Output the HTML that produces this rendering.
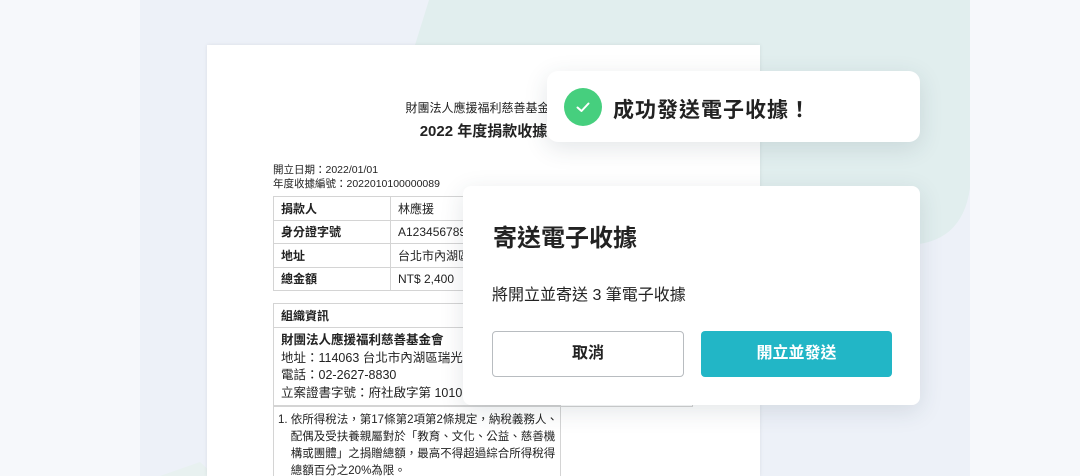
<!DOCTYPE html>
<html><head><meta charset="utf-8"><style>
*{margin:0;padding:0;box-sizing:border-box}
html,body{width:1080px;height:476px;overflow:hidden}
body{background:#f6f8fb;position:relative;font-family:"Liberation Sans","Noto Sans CJK TC",sans-serif;color:#222}
.panel{position:absolute;left:140px;top:0;width:830px;height:476px;background:#edf1f8;overflow:hidden}
.doc{position:absolute;left:207px;top:45px;width:553px;height:431px;background:#fff;box-shadow:0 0 4px rgba(0,0,0,.08);overflow:hidden}
.abs{position:absolute;white-space:nowrap}
table{border-collapse:collapse;position:absolute}
td{border:1px solid #d4d4d4;font-size:12px;padding:0 7px;height:23.5px}
.card{position:absolute;background:#fff;box-shadow:0 6px 24px rgba(40,60,80,.13)}
</style></head><body>
<div class="panel"></div>
<svg class="abs" style="left:0;top:0" width="1080" height="476">
<path d="M429,0 H970 V188 Q962,245 905,245 H360 L415,45 Z" fill="#e1eeee"/>
<path d="M160,476 L200,462 L215,476 Z" fill="#e8f1f0"/>
</svg>
<div class="doc">
<div class="abs" style="left:0;width:553px;text-align:center;top:54px;font-size:12px">財團法人應援福利慈善基金會</div>
<div class="abs" style="left:0;width:553px;text-align:center;top:75px;font-size:15px;font-weight:bold">2022 年度捐款收據</div>
<div class="abs" style="left:66px;top:118px;font-size:10.5px;line-height:14px">開立日期：2022/01/01<br>年度收據編號：2022010100000089</div>
<table style="left:66px;top:151px;width:420px">
<tr><td style="width:117px;font-weight:bold">捐款人</td><td>林應援</td></tr>
<tr><td style="font-weight:bold">身分證字號</td><td>A123456789</td></tr>
<tr><td style="font-weight:bold">地址</td><td>台北市內湖區瑞光路</td></tr>
<tr><td style="font-weight:bold">總金額</td><td>NT$ 2,400</td></tr>
</table>
<table style="left:66px;top:258px;width:420px">
<tr><td style="font-weight:bold;height:24px">組織資訊</td></tr>
<tr><td style="line-height:17.5px;padding:4px 7px;font-size:12.5px"><b>財團法人應援福利慈善基金會</b><br>地址：114063 台北市內湖區瑞光路 399號<br>電話：02-2627-8830<br>立案證書字號：府社啟字第 1010101010號</td></tr>
</table>
<table style="left:66px;top:360px;width:284px">
<tr><td style="line-height:17px;padding:6px 2px 6px 4px;font-size:11.5px;height:90px;vertical-align:top;white-space:nowrap">1. 依所得稅法，第17條第2項第2條規定，納稅義務人、<br>&nbsp;&nbsp;&nbsp;&nbsp;配偶及受扶養親屬對於「教育、文化、公益、慈善機<br>&nbsp;&nbsp;&nbsp;&nbsp;構或團體」之捐贈總額，最高不得超過綜合所得稅得<br>&nbsp;&nbsp;&nbsp;&nbsp;總額百分之20%為限。</td></tr>
</table>
</div>
<div class="card" style="left:547px;top:71px;width:373px;height:71px;border-radius:11px">
<div class="abs" style="left:17px;top:17px;width:38px;height:38px;border-radius:50%;background:#46cf7e"></div>
<svg class="abs" style="left:17px;top:17px" width="38" height="38"><path d="M13.5,19.5 L17.5,23 L24.5,15.5" fill="none" stroke="#fff" stroke-width="2" stroke-linecap="round" stroke-linejoin="round"/></svg>
<div class="abs" style="left:66px;top:23px;font-size:21px;font-weight:bold;letter-spacing:1px">成功發送電子收據！</div>
</div>
<div class="card" style="left:463px;top:186px;width:457px;height:219px;border-radius:8px">
<div class="abs" style="left:30px;top:32px;font-size:24px;font-weight:bold">寄送電子收據</div>
<div class="abs" style="left:29px;top:95px;font-size:16px">將開立並寄送 3 筆電子收據</div>
<div class="abs" style="left:29px;top:145px;width:192px;height:46px;border:1px solid #b8bcc0;border-radius:4px;text-align:center;line-height:44px;font-size:16px;font-weight:bold">取消</div>
<div class="abs" style="left:238px;top:145px;width:191px;height:46px;background:#22b6c6;border-radius:4px;text-align:center;line-height:46px;font-size:16px;font-weight:bold;color:#fff">開立並發送</div>
</div>
</body></html>
